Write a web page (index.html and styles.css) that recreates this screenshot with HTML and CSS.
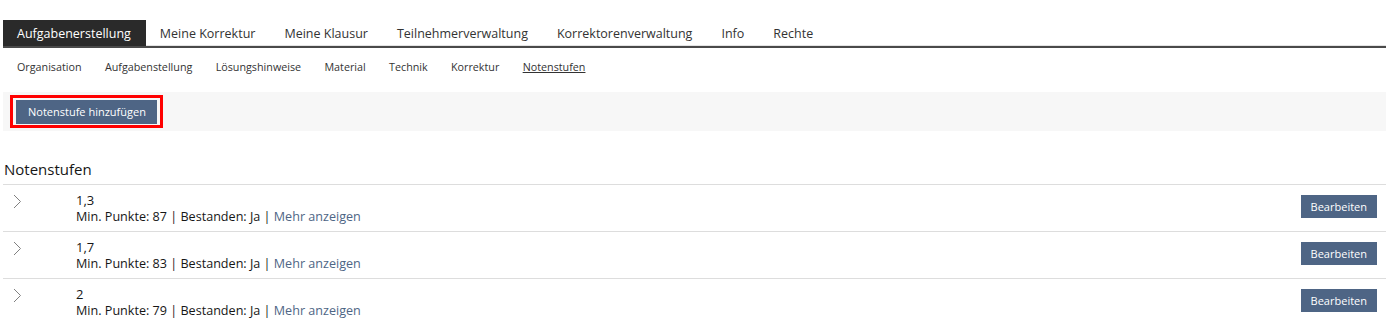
FILE: index.html
```html
<!DOCTYPE html>
<html lang="de">
<head>
    <meta charset="UTF-8">
    <title>Notenstufen</title>
    <link rel="stylesheet" href="styles.css">
</head>
<body>
    <div class="page">
        <ul class="tabs">
            <li class="active">Aufgabenerstellung</li>
            <li>Meine Korrektur</li>
            <li>Meine Klausur</li>
            <li>Teilnehmerverwaltung</li>
            <li>Korrektorenverwaltung</li>
            <li>Info</li>
            <li>Rechte</li>
        </ul>

        <ul class="subtabs">
            <li>Organisation</li>
            <li>Aufgabenstellung</li>
            <li>Lösungshinweise</li>
            <li>Material</li>
            <li>Technik</li>
            <li>Korrektur</li>
            <li class="active">Notenstufen</li>
        </ul>

        <div class="toolbar">
            <div class="highlight">
                <button class="btn">Notenstufe hinzufügen</button>
            </div>
        </div>

        <h2 class="list-title">Notenstufen</h2>

        <div class="list">
            <div class="row">
                <span class="chevron"><svg width="9" height="15" viewBox="0 0 9 15"><path d="M1 1 L7.5 7.5 L1 14" fill="none" stroke="#808080" stroke-width="1"/></svg></span>
                <div class="info">
                    <div class="grade">1,3</div>
                    <div class="meta">Min. Punkte: 87 | Bestanden: Ja | <a>Mehr anzeigen</a></div>
                </div>
                <button class="btn small">Bearbeiten</button>
            </div>
            <div class="row">
                <span class="chevron"><svg width="9" height="15" viewBox="0 0 9 15"><path d="M1 1 L7.5 7.5 L1 14" fill="none" stroke="#808080" stroke-width="1"/></svg></span>
                <div class="info">
                    <div class="grade">1,7</div>
                    <div class="meta">Min. Punkte: 83 | Bestanden: Ja | <a>Mehr anzeigen</a></div>
                </div>
                <button class="btn small">Bearbeiten</button>
            </div>
            <div class="row">
                <span class="chevron"><svg width="9" height="15" viewBox="0 0 9 15"><path d="M1 1 L7.5 7.5 L1 14" fill="none" stroke="#808080" stroke-width="1"/></svg></span>
                <div class="info">
                    <div class="grade">2</div>
                    <div class="meta">Min. Punkte: 79 | Bestanden: Ja | <a>Mehr anzeigen</a></div>
                </div>
                <button class="btn small">Bearbeiten</button>
            </div>
        </div>
    </div>
</body>
</html>
```

FILE: styles.css
```css
body {
    margin: 0;
    font-family: "Open Sans", sans-serif;
    color: #161616;
    background: #fff;
}

.page {
    margin: 0 9px 0 3px;
    padding-top: 20px;
}

ul {
    list-style: none;
    margin: 0;
    padding: 0;
}

.tabs {
    display: flex;
    border-bottom: 2px solid #4a4a4a;
    box-shadow: 0 -1px 0 #e4e4e4 inset;
}

.tabs li {
    font-size: 12.5px;
    line-height: 25px;
    padding: 1px 15px 0 14px;
    color: #333;
}

.tabs li.active {
    background: #2a2a2a;
    color: #fff;
}

.subtabs {
    display: flex;
    gap: 23.3px;
    padding: 11px 14px 0;
    height: 44px;
    box-sizing: border-box;
}

.subtabs li {
    font-size: 10.75px;
    line-height: 17px;
    color: #333;
}

.subtabs li.active {
    text-decoration: underline;
}

.toolbar {
    background: #f7f7f7;
    height: 39px;
    padding: 3px 0 0 7px;
    box-sizing: border-box;
}

.highlight {
    display: inline-block;
    border: 3px solid #f00;
    padding: 1px 3px;
}

.btn {
    font-family: "Open Sans", sans-serif;
    font-size: 11px;
    color: #fff;
    background: #4e6585;
    border: none;
    border-radius: 0;
    padding: 0 11px 0 12px;
    height: 24px;
}

.btn.small {
    font-size: 11px;
    padding: 0 10px;
    height: 23px;
}

.list-title {
    font-size: 15px;
    font-weight: normal;
    margin: 0;
    padding: 28px 0 0 1px;
    height: 53px;
    box-sizing: border-box;
    color: #161616;
}

.list {
    border-top: 1px solid #ddd;
}

.row {
    display: flex;
    align-items: flex-start;
    height: 47px;
    border-bottom: 1px solid #ddd;
    box-sizing: border-box;
}

.row:last-child {
    border-bottom: none;
}

.chevron {
    width: 73px;
    padding: 7px 0 0 10px;
    box-sizing: border-box;
}

.info {
    flex: 1;
    padding-top: 7px;
    font-size: 12.6px;
}

.grade {
    font-size: 13px;
    line-height: 16px;
}

.meta {
    line-height: 18px;
    color: #161616;
}

.meta a {
    color: #4e6585;
}

.row .btn {
    margin: 10px 9px 0 0;
}
```
